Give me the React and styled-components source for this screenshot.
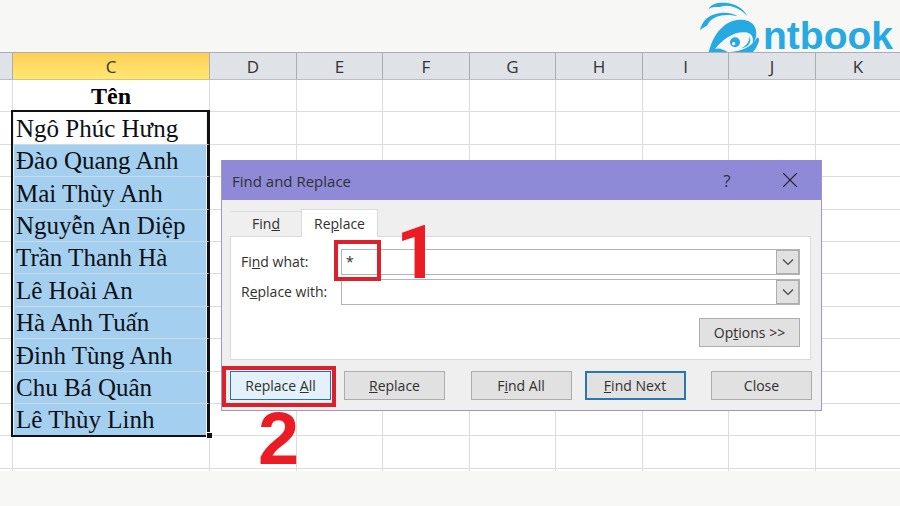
import React from 'react';
import styled, { createGlobalStyle } from 'styled-components';

const Global = createGlobalStyle`
  *, *::before, *::after { box-sizing: border-box; }
  html, body { margin: 0; background: #f7f7f5; }
  body { overflow: hidden; font-family: "Open Sans", "Noto Sans", sans-serif; color: #222; }
  button, input { font: inherit; color: inherit; }
`;

const Page = styled.main`
  position: relative;
  min-height: 100vh;
`;

const Brand = styled.header`
  height: 52px;
  padding-right: 7px;
  display: flex;
  justify-content: flex-end;
`;

const BrandMark = styled.svg`
  width: 66px;
  height: 52px;
  flex: none;
`;

const BrandName = styled.span`
  padding-top: 14px;
  font: 700 39px/44px "Liberation Sans", sans-serif;
  color: #27a9e1;
`;

const SheetView = styled.div`
  height: 419px;
  overflow: hidden;
  background: #fff;
`;

const Sheet = styled.table`
  width: 100%;
  table-layout: fixed;
  border-collapse: separate;
  border-spacing: 0;
`;

const Col = styled.col`
  width: ${p => p.$w}px;
`;

const ColumnHead = styled.th`
  height: 28px;
  padding: 2px 0 0;
  border: solid #a9adb4;
  border-width: 1px 1px 1px 0;
  border-bottom-color: ${p => (p.$active ? '#d8c27a' : '#b9bdc4')};
  background: ${p => (p.$active ? 'linear-gradient(#ffcf55, #ffe873)' : '#dfe2e7')};
  font-size: 17px;
  line-height: 24px;
  font-weight: 400;
  color: #333;
  &:last-child { border-right: 0; }
`;

const Row = styled.tr`
  height: 32px;
  &:nth-child(5n + 2), &:nth-child(5n + 4) { height: 33px; }
`;

const Cell = styled.td`
  padding: 0;
  border: solid #dcdcde;
  border-width: 0 1px 1px 0;
  &:last-child { border-right: 0; }
`;

const TitleCell = styled(Cell)`
  padding-top: 1px;
  font: 700 24px/30px "Liberation Serif", serif;
  color: #000;
  text-align: center;
`;

const NameCell = styled(Cell)`
  position: relative;
  padding: 1px 0 1px 3px;
  border-right: 3px solid #111;
  border-bottom-color: ${p => (p.$last ? '#111' : '#c8dbea')};
  background: ${p => (p.$selected ? '#a5cfef' : '#fff')};
  box-shadow:
    inset 1px 0 0 #e8f2fa, inset -1px 0 0 #e8f2fa,
    -2px 0 0 #111
    ${p => p.$first && ', 0 -2px 0 #111, -2px -2px 0 #111'}
    ${p => p.$last && ', 0 1px 0 #111, -2px 1px 0 #111'};
  font: 400 25px/29px "Liberation Serif", serif;
  color: #0c1016;
  white-space: nowrap;
`;

const FillHandle = styled.span`
  position: absolute;
  right: -5px;
  bottom: -3px;
  width: 6px;
  height: 6px;
  border: solid #fff;
  border-width: 1px 0 0 1px;
  background: #111;
`;

const Dialog = styled.section`
  position: absolute;
  left: 221px;
  top: 160px;
  width: 601px;
  border: 1px solid #9c97cb;
  border-top: 0;
  background: #efefef;
  font-size: 14px;
  line-height: 20px;
  color: #303030;
`;

const TitleBar = styled.header`
  height: 40px;
  padding: 2px 17px 0 10px;
  display: flex;
  align-items: center;
  background: #8e8ad7;
`;

const DialogTitle = styled.h1`
  flex: 1;
  margin: 0;
  font-size: 15px;
  font-weight: 400;
`;

const TitleButton = styled.button`
  width: 28px;
  height: 28px;
  margin-left: 35px;
  padding: 0;
  border: 0;
  background: none;
  font-size: 17px;
  line-height: 28px;
`;

const DialogBody = styled.div`
  padding: 9px 9px 10px 8px;
`;

const TabList = styled.div`
  display: flex;
  align-items: flex-end;
  padding-left: 1px;
`;

const Tab = styled.button`
  width: ${p => (p.$active ? 77 : 70)}px;
  height: ${p => (p.$active ? 28 : 25)}px;
  padding: 0;
  border: 1px solid #dadada;
  border-bottom: 0;
  ${p => !p.$active && 'border-left: 0; border-right: 0;'}
  margin-bottom: ${p => (p.$active ? -1 : 0)}px;
  background: ${p => (p.$active ? '#fff' : '#efefef')};
  position: relative;
`;

const Panel = styled.div`
  margin-right: 1px;
  height: 124px;
  padding: 12px 10px;
  border: 1px solid #dadada;
  background: #fff;
  display: flex;
  flex-direction: column;
  gap: 4px;
`;

const Field = styled.div`
  display: flex;
  height: 26px;
`;

const FieldLabel = styled.label`
  width: 100px;
  line-height: 26px;
`;

const Combo = styled.div`
  flex: 1;
  min-width: 0;
  display: flex;
  border: 1px solid #b4b4b4;
`;

const ComboInput = styled.input`
  flex: 1;
  min-width: 0;
  border: 0;
  padding: 0 4px;
  background: #fff;
  outline: 0;
`;

const ComboArrow = styled.button`
  width: 23px;
  padding: 0;
  border: 1px solid #adadad;
  background: #e1e1e1;
  display: flex;
  align-items: center;
  justify-content: center;
`;

const PushButton = styled.button`
  width: 101px;
  height: 29px;
  padding: 0;
  border: ${p => (p.$primary ? '2px solid #2678b5' : p.$hot ? '1px solid #2f6fa6' : '1px solid #adadad')};
  background: ${p => (p.$hot ? '#e3f1fb' : '#e1e1e1')};
`;

const OptionsRow = styled.div`
  display: flex;
  justify-content: flex-end;
  padding-top: 9px;
`;

const Actions = styled.div`
  display: flex;
  justify-content: space-between;
  padding-top: 11px;
`;

const ActionPair = styled.div`
  display: flex;
  gap: 13px;
`;

const Highlight = styled.div`
  position: absolute;
  left: ${p => p.$x}px;
  top: ${p => p.$y}px;
  width: ${p => p.$w}px;
  height: 41px;
  border: 4px solid #d9222c;
  pointer-events: none;
`;

const StepNumber = styled.strong`
  position: absolute;
  left: ${p => p.$x}px;
  top: ${p => p.$y}px;
  font: 700 74px/74px ${p => p.$face}, sans-serif;
  color: #ec1c24;
`;

const columns = [
  ['', 13], ['C', 197], ['D', 87], ['E', 86], ['F', 87], ['G', 86], ['H', 87], ['I', 86], ['J', 87], ['K', 0],
];
const names = [
  'Ngô Phúc Hưng', 'Đào Quang Anh', 'Mai Thùy Anh', 'Nguyễn An Diệp', 'Trần Thanh Hà',
  'Lê Hoài An', 'Hà Anh Tuấn', 'Đinh Tùng Anh', 'Chu Bá Quân', 'Lê Thùy Linh',
];
const rows = ['Tên', ...names, '', ''];

function NameColumnCell({ index, text }) {
  if (index === 0) return <TitleCell>{text}</TitleCell>;
  if (!text) return <Cell />;
  const last = index === names.length;
  return (
    <NameCell $first={index === 1} $selected={index > 1} $last={last}>
      {text}
      {last && <FillHandle />}
    </NameCell>
  );
}

function ComboField({ id, label, value }) {
  return (
    <Field>
      <FieldLabel htmlFor={id}>{label}</FieldLabel>
      <Combo>
        <ComboInput id={id} defaultValue={value} />
        <ComboArrow aria-label="Show history">
          <svg width="12" height="8" viewBox="0 0 12 8" fill="none" stroke="#444" strokeWidth="1.2">
            <path d="M1 1.5 6 6.5 11 1.5" />
          </svg>
        </ComboArrow>
      </Combo>
    </Field>
  );
}

export default function App() {
  return (
    <Page>
      <Global />
      <Brand>
        <BrandMark viewBox="0 0 198 156" fill="#27a9e1" aria-hidden="true">
          <path d="M35 27 C42 12 58 7 85 8 C115 10 138 24 152 49 C135 31 115 18 88 17 C76 17 68 22 58 21 C48 20 42 23 35 27 Z" />
          <path d="M9 93 C12 65 35 42 70 39 C92 37 110 41 122 49 C98 43 76 43 57 51 C43 57 36 65 31 76 C25 83 16 82 9 93 Z" />
          <path d="M35 156 C45 120 58 96 78 80 C104 54 152 52 170 75 C182 92 180 116 166 134 C172 112 164 100 146 97 C112 93 76 118 54 147 C68 142 80 150 92 156 Z" />
          <path d="M100 156 C135 153 164 140 180 113 C187 112 188 120 184 128 C180 139 175 148 168 156 Z" />
          <path d="M132 145 C148 138 157 126 158 108 C164 126 156 142 132 145 Z" />
          <circle cx="114" cy="127" r="15" />
          <circle cx="110" cy="131" r="5" fill="#f7f7f5" />
        </BrandMark>
        <BrandName>ntbook</BrandName>
      </Brand>
      <SheetView>
        <Sheet>
          <colgroup>
            {columns.map(([name, w]) => (w ? <Col key={name} $w={w} /> : <col key={name} />))}
          </colgroup>
          <thead>
            <tr>
              {columns.map(([name]) => (
                <ColumnHead key={name} $active={name === 'C'}>{name}</ColumnHead>
              ))}
            </tr>
          </thead>
          <tbody>
            {rows.map((text, index) => (
              <Row key={index}>
                <Cell />
                <NameColumnCell index={index} text={text} />
                {columns.slice(2).map(([name]) => <Cell key={name} />)}
              </Row>
            ))}
          </tbody>
        </Sheet>
      </SheetView>

      <Dialog role="dialog" aria-labelledby="dialog-title">
        <TitleBar>
          <DialogTitle id="dialog-title">Find and Replace</DialogTitle>
          <TitleButton aria-label="Help">?</TitleButton>
          <TitleButton aria-label="Close dialog">
            <svg width="14" height="14" viewBox="0 0 14 14" stroke="#222" strokeWidth="1.2">
              <path d="M0 0 14 14M14 0 0 14" />
            </svg>
          </TitleButton>
        </TitleBar>
        <DialogBody>
          <TabList role="tablist">
            <Tab role="tab">Fin<u>d</u></Tab>
            <Tab role="tab" aria-selected="true" $active>Re<u>p</u>lace</Tab>
          </TabList>
          <Panel role="tabpanel">
            <ComboField id="find-what" label={<>Fi<u>n</u>d what:</>} value="*" />
            <ComboField id="replace-with" label={<>R<u>e</u>place with:</>} value="" />
            <OptionsRow>
              <PushButton>Op<u>t</u>ions &gt;&gt;</PushButton>
            </OptionsRow>
          </Panel>
          <Actions>
            <ActionPair>
              <PushButton $hot>Replace <u>A</u>ll</PushButton>
              <PushButton><u>R</u>eplace</PushButton>
            </ActionPair>
            <ActionPair>
              <PushButton>F<u>i</u>nd All</PushButton>
              <PushButton $primary><u>F</u>ind Next</PushButton>
            </ActionPair>
            <PushButton>Close</PushButton>
          </Actions>
        </DialogBody>
      </Dialog>
      <Highlight $x={334} $y={240} $w={47} />
      <Highlight $x={222} $y={366} $w={114} />
      <StepNumber $x={396} $y={216} $face="Roboto">1</StepNumber>
      <StepNumber $x={258} $y={402} $face='"Liberation Sans"'>2</StepNumber>
    </Page>
  );
}
